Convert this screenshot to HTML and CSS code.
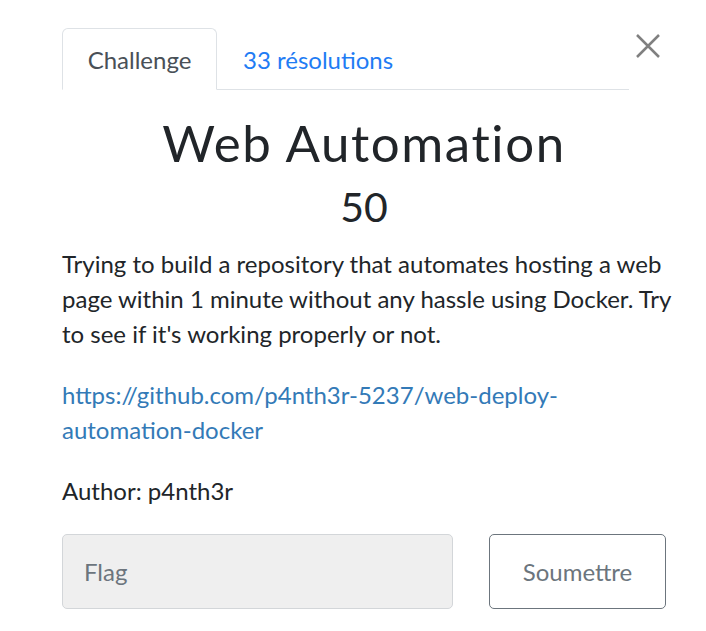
FILE: index.html
```html
<!DOCTYPE html>
<html>
<head>
<meta charset="utf-8">
<link rel="stylesheet" href="styles.css">
</head>
<body>
<div class="modal">
  <button class="close" aria-label="Close">
    <svg width="26" height="26" viewBox="0 0 26 26"><path d="M2 2 L24 24 M24 2 L2 24" stroke="#808080" stroke-width="2.5" fill="none"/></svg>
  </button>
  <div class="tabs">
    <div class="tab active">Challenge</div>
    <div class="tab link">33 résolutions</div>
  </div>
  <h2 class="title">Web Automation</h2>
  <div class="points">50</div>
  <div class="desc">
    <p>Trying to build a repository that automates hosting a web page within 1 minute without any hassle using Docker. Try to see if it's working properly or not.</p>
    <p><a href="#" class="url">https://github.com/p4nth3r-5237/web-deploy-automation-docker</a></p>
    <p>Author: p4nth3r</p>
  </div>
  <div class="submit-row">
    <div class="flag">Flag</div>
    <button class="btn">Soumettre</button>
  </div>
</div>
</body>
</html>
```
FILE: styles.css
```css
html, body { margin: 0; padding: 0; background: #fff; }
body { font-family: Lato, "Open Sans", sans-serif; color: #212529; }
.modal { position: relative; padding: 28px 40px 0 62px; width: 604px; }
.close { position: absolute; top: 33px; left: 635px; border: 0; background: none; padding: 0; cursor: pointer; }
.tabs { display: flex; border-bottom: 1px solid #dee2e6; width: 567px; height: 61px; }
.tab { font-size: 24px; padding: 1px 25px 0; display: flex; align-items: center; height: 61px; box-sizing: border-box; border: 1px solid transparent; border-top-left-radius: 6px; border-top-right-radius: 6px; margin-bottom: -1px; }
.tab.active { color: #495057; border-color: #dee2e6 #dee2e6 #fff; background: #fff; width: 155px; justify-content: center; padding: 1px 0 0; height: 62px; }
.tab.link { color: #1f7cf4; }
.title { margin: 22px 0 0; text-align: center; font-weight: 400; font-size: 51px; letter-spacing: 1.6px; line-height: 1.2; }
.points { text-align: center; font-size: 41px; line-height: 1.2; margin-top: 9px; }
.desc { font-size: 24px; line-height: 35px; margin-top: 15px; margin-right: -6px; }
.desc p { margin: 0 0 26px; }
.url { color: #337ab7; text-decoration: none; }
.submit-row { display: flex; gap: 36px; margin-top: 1px; }
.flag { flex: 0 0 391px; height: 75px; box-sizing: border-box; background: #efefef; border: 1px solid #d3d6d9; border-radius: 5px; padding: 0 21px; display: flex; align-items: center; font-size: 24px; color: #6c757d; }
.btn { flex: 0 0 177px; height: 75px; box-sizing: border-box; background: #fff; border: 1px solid #6c757d; border-radius: 5px; font-family: Lato, sans-serif; font-size: 24px; color: #6c757d; padding: 0; }
```
